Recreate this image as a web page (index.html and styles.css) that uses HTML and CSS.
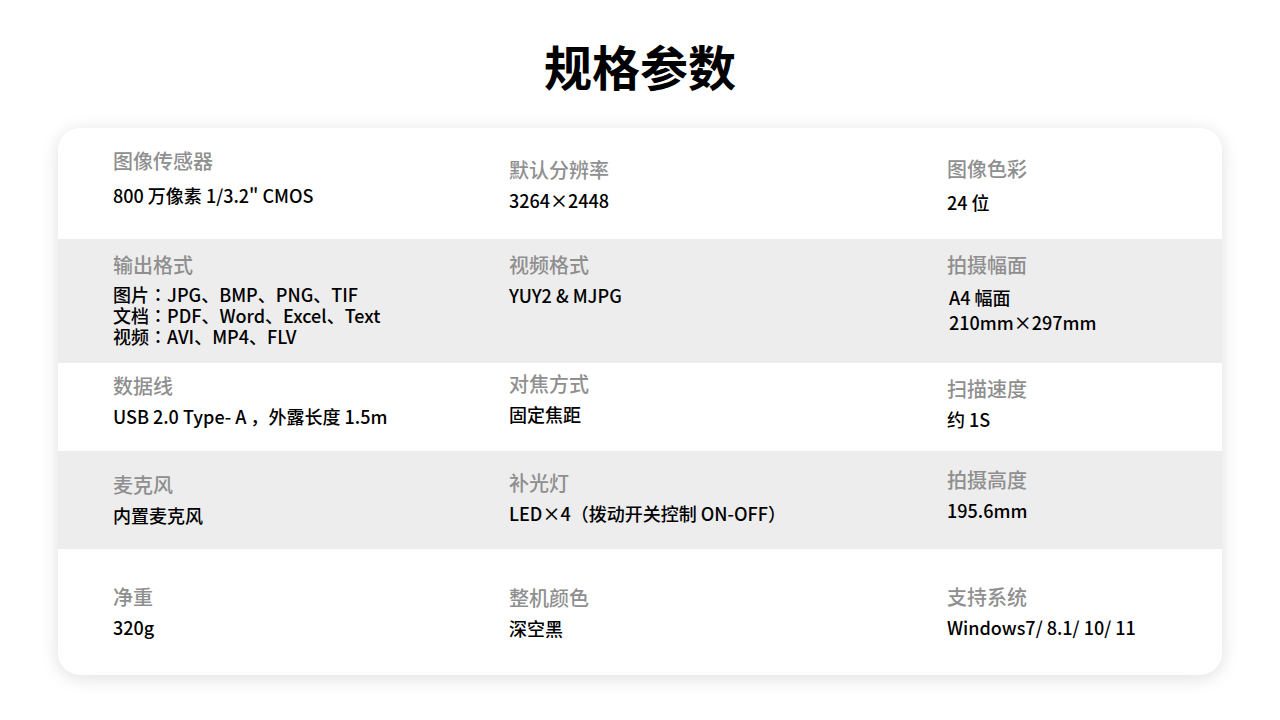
FILE: index.html
```html
<!DOCTYPE html>
<html lang="zh-CN">
<head>
<meta charset="utf-8">
<title>规格参数</title>
<link rel="stylesheet" href="styles.css">
</head>
<body>
<h1 class="title">规格参数</h1>
<div class="card">
  <div class="row row-1">
    <div class="cell t19"><div class="label">图像传感器</div><div class="value m8">800 万像素 1/3.2" CMOS</div></div>
    <div class="cell t28"><div class="label">默认分辨率</div><div class="value">3264×2448</div></div>
    <div class="cell t27"><div class="label">图像色彩</div><div class="value m7">24 位</div></div>
  </div>
  <div class="row row-2 gray">
    <div class="cell t12"><div class="label">输出格式</div><div class="value tight">图片<span class="colon" lang="zh-TW">：</span>JPG、BMP、PNG、TIF<br>文档<span class="colon" lang="zh-TW">：</span>PDF、Word、Excel、Text<br>视频<span class="colon" lang="zh-TW">：</span>AVI、MP4、FLV</div></div>
    <div class="cell t12"><div class="label">视频格式</div><div class="value">YUY2 &amp; MJPG</div></div>
    <div class="cell t12"><div class="label">拍摄幅面</div><div class="value loose shift">A4 幅面<br>210mm×297mm</div></div>
  </div>
  <div class="row row-3">
    <div class="cell t9"><div class="label">数据线</div><div class="value">USB 2.0 Type- A ，外露长度 1.5m</div></div>
    <div class="cell t7"><div class="label">对焦方式</div><div class="value">固定焦距</div></div>
    <div class="cell t12"><div class="label">扫描速度</div><div class="value">约 1S</div></div>
  </div>
  <div class="row row-4 gray">
    <div class="cell t20"><div class="label">麦克风</div><div class="value">内置麦克风</div></div>
    <div class="cell t18"><div class="label">补光灯</div><div class="value">LED×4（拨动开关控制 ON-OFF）</div></div>
    <div class="cell t15"><div class="label">拍摄高度</div><div class="value">195.6mm</div></div>
  </div>
  <div class="row row-5">
    <div class="cell t34"><div class="label">净重</div><div class="value">320g</div></div>
    <div class="cell t35"><div class="label">整机颜色</div><div class="value">深空黑</div></div>
    <div class="cell t34"><div class="label">支持系统</div><div class="value">Windows7/ 8.1/ 10/ 11</div></div>
  </div>
</div>
</body>
</html>
```

FILE: styles.css
```css
html, body {
  margin: 0;
  padding: 0;
  background: #ffffff;
}

body {
  width: 1280px;
  height: 720px;
  font-family: "Noto Sans CJK SC", "Noto Sans", sans-serif;
  color: #000;
}

.title {
  margin: 0;
  padding-top: 35px;
  height: 60px;
  line-height: 60px;
  font-size: 48px;
  font-weight: 700;
  text-align: center;
  color: #000;
}

.card {
  width: 1164px;
  margin: 33px auto 0;
  background: #fff;
  border-radius: 22px;
  overflow: hidden;
  box-shadow: 0 3px 18px rgba(0, 0, 0, 0.13);
}

.row {
  display: grid;
  grid-template-columns: 396px 438px 1fr;
  padding-left: 55px;
  box-sizing: border-box;
}

.gray { background: #ededed; }

.row-1 { height: 111px; }
.row-2 { height: 124px; }
.row-3 { height: 88px; }
.row-4 { height: 98px; }
.row-5 { height: 126px; }

.label {
  font-size: 20px;
  line-height: 28px;
  font-weight: 500;
  color: #8f8f8f;
}

.value {
  margin-top: 4px;
  font-size: 18px;
  line-height: 24px;
  font-weight: 500;
  color: #000;
  white-space: nowrap;
}

.colon {
  font-family: "Noto Sans CJK TC", "Noto Sans CJK SC", sans-serif;
}

.value.tight { line-height: 21px; margin-top: 5px; }
.value.loose { line-height: 25px; margin-top: 6px; }
.value.shift { padding-left: 2px; }
.value.m8 { margin-top: 8px; }
.value.m7 { margin-top: 7px; }

.t7 { padding-top: 7px; }
.t9 { padding-top: 9px; }
.t12 { padding-top: 12px; }
.t15 { padding-top: 15px; }
.t18 { padding-top: 18px; }
.t19 { padding-top: 19px; }
.t20 { padding-top: 20px; }
.t27 { padding-top: 27px; }
.t28 { padding-top: 28px; }
.t34 { padding-top: 34px; }
.t35 { padding-top: 35px; }
```
